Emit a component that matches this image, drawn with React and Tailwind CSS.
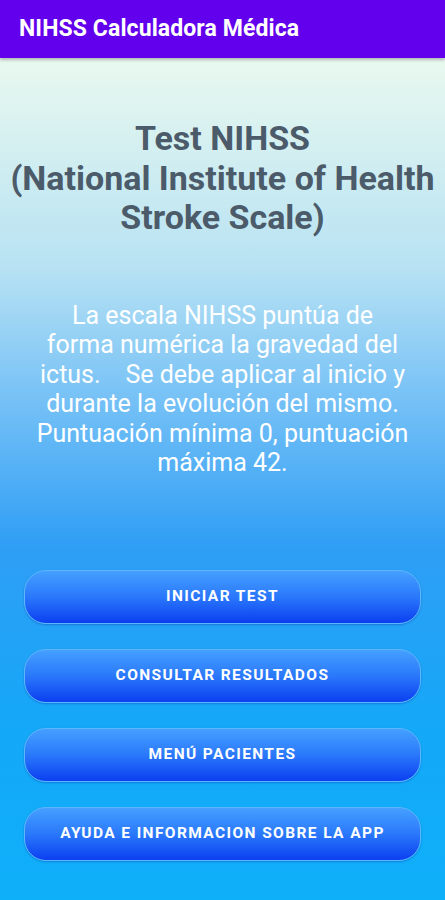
import React from "react";

const buttons = [
  "INICIAR TEST",
  "CONSULTAR RESULTADOS",
  "MENÚ PACIENTES",
  "AYUDA E INFORMACION SOBRE LA APP",
];

const intro = [
  "La escala NIHSS puntúa de",
  "forma numérica la gravedad del",
  "ictus.    Se debe aplicar al inicio y",
  "durante la evolución del mismo.",
  "Puntuación mínima 0, puntuación",
  "máxima 42.",
];

const App = () => {
  return (
    <div
      className="w-[445px] h-[900px] flex flex-col overflow-hidden"
      style={{ fontFamily: "Roboto, 'Liberation Sans', sans-serif" }}
    >
      {/* Toolbar */}
      <div className="h-[58px] shrink-0 bg-[#6200ee] flex items-center px-[19px] shadow-[0_2px_3px_rgba(0,0,0,0.25)] z-10">
        <h1 className="text-white text-[23px] font-bold tracking-[0.1px]">
          NIHSS Calculadora Médica
        </h1>
      </div>

      {/* Body */}
      <div className="flex-1 flex flex-col items-center bg-[linear-gradient(to_bottom,#e9f9ef_0%,#b7e2f3_25%,#78c2f6_40%,#2f9ef5_58%,#14a8f8_80%,#0fb0fa_100%)]">
        <h2 className="mt-[61px] text-center text-[34px] leading-[39.5px] font-bold text-[#4b5b6a] whitespace-nowrap">
          Test NIHSS
          <br />
          (National Institute of Health
          <br />
          Stroke Scale)
        </h2>

        <div className="mt-[63px] flex flex-col items-center text-white text-[25px] leading-[29.5px] whitespace-pre">
          {intro.map((line) => (
            <span key={line}>{line}</span>
          ))}
        </div>

        <div className="mt-[92px] w-[397px] flex flex-col gap-[25px]">
          {buttons.map((label) => (
            <button
              key={label}
              className="h-[54px] rounded-[22px] border border-[#5cb6ff] bg-[linear-gradient(to_bottom,#45a0ff_0%,#2a78fb_50%,#0b3ff0_100%)] shadow-[0_1px_2px_rgba(0,40,160,0.35)] text-white text-[15.5px] font-bold tracking-[1.4px] flex items-center justify-center"
            >
              {label}
            </button>
          ))}
        </div>
      </div>
    </div>
  );
};

export default App;
